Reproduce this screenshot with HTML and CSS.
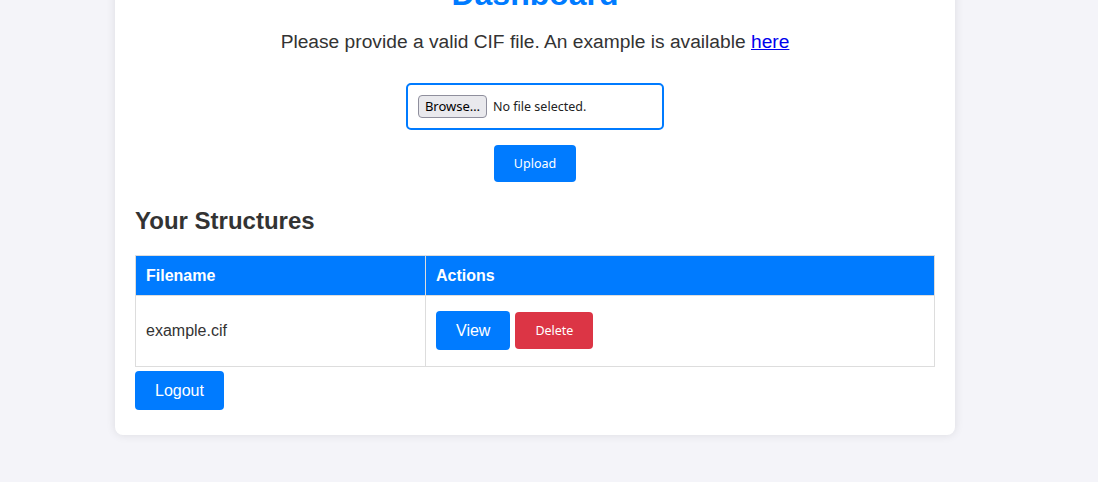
FILE: index.html
```html
<!DOCTYPE html>
<html lang="en">
<head>
<meta charset="utf-8">
<title>Dashboard</title>
<link rel="stylesheet" href="styles.css">
</head>
<body>
<div class="container">
  <h1 class="title">Dashboard</h1>
  <p class="intro">Please provide a valid CIF file. An example is available <a href="#">here</a></p>
  <form class="upload-form">
    <div class="file-input">
      <span class="browse">Browse…</span>
      <span class="file-name">No file selected.</span>
    </div>
    <button type="button" class="btn-small btn-blue">Upload</button>
  </form>
  <h2 class="section-title">Your Structures</h2>
  <table class="structures">
    <thead>
      <tr><th class="col-file">Filename</th><th>Actions</th></tr>
    </thead>
    <tbody>
      <tr>
        <td>example.cif</td>
        <td><div class="actions"><a href="#" class="btn">View</a><button type="button" class="btn-small btn-red">Delete</button></div></td>
      </tr>
    </tbody>
  </table>
  <a href="#" class="btn logout">Logout</a>
</div>
</body>
</html>
```

FILE: styles.css
```css
html, body {
  margin: 0;
  padding: 0;
}
body {
  background: #f4f4f9;
  font-family: "Liberation Sans", Arial, sans-serif;
  color: #333;
  height: 482px;
  overflow: hidden;
}
.container {
  width: 800px;
  margin: -44px 0 0 115px;
  padding: 20px;
  background: #fff;
  border-radius: 8px;
  box-shadow: 0 0 10px rgba(0, 0, 0, 0.1);
}
.title {
  margin: 0 0 18px;
  font-size: 32px;
  line-height: 36.8px;
  color: #007bff;
  text-align: center;
}
.intro {
  margin: 0;
  font-size: 19.2px;
  text-align: center;
}
.intro a {
  color: #0000ee;
}
.upload-form {
  display: flex;
  flex-direction: column;
  align-items: center;
  gap: 15px;
  margin-top: 30px;
}
.file-input {
  display: flex;
  align-items: center;
  gap: 6px;
  width: 234px;
  padding: 10px;
  border: 2px solid #007bff;
  border-radius: 5px;
  font-family: "Noto Sans", sans-serif;
  font-size: 12.5px;
}
.browse {
  box-sizing: border-box;
  height: 23px;
  width: 69px;
  padding: 0 4px;
  display: flex;
  align-items: center;
  justify-content: center;
  background: #e9e9ed;
  border: 1px solid #8f8f9d;
  border-radius: 4px;
  color: #000;
  white-space: nowrap;
  font-size: 13px;
}
.file-name {
  color: #222;
}
.btn-small {
  font-family: "Noto Sans", sans-serif;
  font-size: 12.5px;
  line-height: 17px;
  padding: 10px 20px;
  border: none;
  border-radius: 4px;
  color: #fff;
}
.btn-blue { background: #007bff; }
.btn-red { background: #dc3545; }
.section-title {
  margin: 25px 0 20px;
  font-size: 24px;
}
.structures {
  width: 800px;
  border-collapse: collapse;
}
.structures th, .structures td {
  border: 1px solid #ddd;
  padding: 10px;
  text-align: left;
  font-size: 16px;
  line-height: 19px;
}
.structures th {
  background: #007bff;
  color: #fff;
}
.structures td {
  padding: 15px 10px 16px;
  vertical-align: middle;
}
.col-file {
  width: 269px;
}
.actions {
  display: flex;
  align-items: center;
  gap: 5px;
}
.btn {
  display: inline-block;
  font-size: 16px;
  line-height: 19px;
  padding: 10px 20px;
  background: #007bff;
  color: #fff;
  text-decoration: none;
  border-radius: 4px;
}
.logout {
  margin: 4px 0 5px;
}
```
